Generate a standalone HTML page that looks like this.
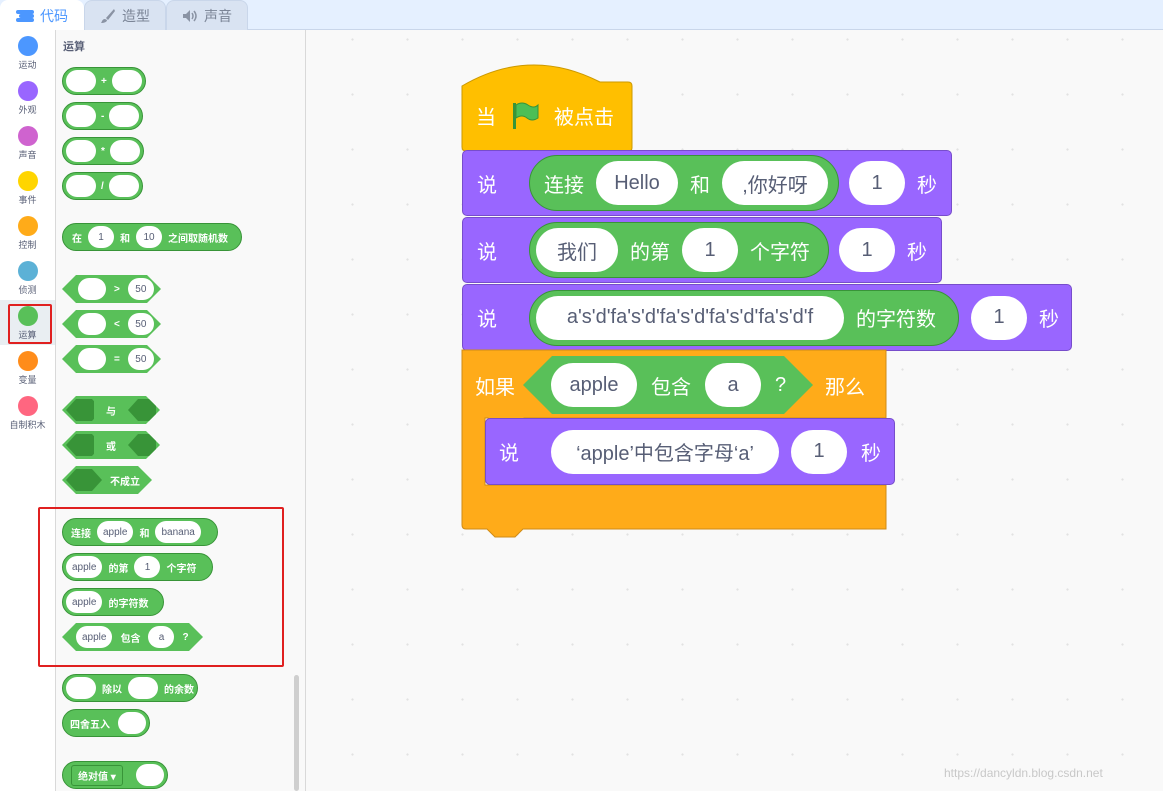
<!DOCTYPE html>
<html><head><meta charset="utf-8"><style>
*{box-sizing:border-box;margin:0;padding:0}
body{width:1163px;height:791px;overflow:hidden;position:relative;background:#f9f9f9;font-family:"Liberation Sans","Noto Sans CJK SC",sans-serif;}
.abs{position:absolute}
.top{left:0;top:0;width:1163px;height:30px;background:#e5f0ff;border-bottom:1px solid #c9d6ea}
.tab{position:absolute;top:0;height:30px;border:1px solid #c9d6ea;border-bottom:none;border-radius:8px 8px 0 0;background:#d9e3f2;color:#7b8597;font-size:14px;display:flex;align-items:center;justify-content:center;gap:6px}
.cats{left:0;top:30px;width:56px;height:761px;background:#fff;border-right:1px solid #d9d9d9}
.cat{position:absolute;left:0;width:55px;text-align:center;font-size:9px;color:#575e75}
.cat i{display:block;width:20px;height:20px;border-radius:50%;margin:0 auto 2px}
.pal{left:56px;top:30px;width:250px;height:761px;background:#f9f9f9;border-right:1px solid #d9d9d9}
.ws{left:306px;top:30px;width:857px;height:761px;background-color:#f9f9f9;background-image:radial-gradient(circle,#e2e2e2 0.8px,transparent 1.4px);background-size:55px 55px;background-position:19px 37px}
.pr{position:absolute;height:28px;background:#59c059;border:1px solid #389438;border-radius:14px;display:flex;align-items:center;gap:5px;padding:0 3px;color:#fff;font-size:10px;font-weight:bold;white-space:nowrap}
.pi{background:#fff;border-radius:11px;height:22px;min-width:28px;color:#575e75;font-weight:normal;font-size:10px;display:flex;align-items:center;justify-content:center;padding:0 6px}
.hex{position:absolute;height:28px;background:#59c059;clip-path:polygon(14px 0,calc(100% - 14px) 0,100% 50%,calc(100% - 14px) 100%,14px 100%,0 50%);display:flex;align-items:center;gap:8px;padding:0 16px;color:#fff;font-size:10px;font-weight:bold}
.dh{width:36px;height:22px;background:#389438;clip-path:polygon(10px 0,26px 0,36px 50%,26px 100%,10px 100%,0 50%)}
.blk{position:absolute;display:flex;align-items:center;color:#fff;font-size:20px;white-space:nowrap}
.say{background:#9966ff;border:1px solid #774dcb;border-radius:5px}
.R{background:#59c059;border:1px solid #389438;border-radius:30px;height:56px;display:flex;align-items:center;gap:12px;padding:0 6px}
.I{background:#fff;border-radius:22px;height:44px;min-width:54px;padding:0 14px;display:flex;align-items:center;justify-content:center;color:#575e75;font-size:20px}
.red{position:absolute;border:2px solid #e02020;border-radius:2px}
</style></head><body>
<div class="abs top"></div>
<div class="tab" style="left:0;width:84px;background:#fff;color:#4c97ff;border-color:#fff"><svg width="18" height="12" viewBox="0 0 18 12"><rect x="0" y="0" width="18" height="4" rx="2" fill="#4c97ff"/><rect x="3" y="4" width="15" height="4" rx="2" fill="#4c97ff"/><rect x="0" y="8" width="18" height="4" rx="2" fill="#4c97ff"/></svg>代码</div>
<div class="tab" style="left:84px;width:82px"><svg width="16" height="16" viewBox="0 0 16 16"><path d="M14 1 L6 10 L8 12 L15 3Z M5 11 C2 11 2 14 1 15 C4 15 7 14 7 12Z" fill="#8a93a4"/></svg>造型</div>
<div class="tab" style="left:166px;width:82px"><svg width="16" height="14" viewBox="0 0 16 14"><path d="M1 5h3l4-4v12l-4-4H1z" fill="#8a93a4"/><path d="M10 4q2 3 0 6M12 2q4 5 0 10" stroke="#8a93a4" fill="none" stroke-width="1.5"/></svg>声音</div>

<div class="abs cats">
 <div class="cat" style="top:6px"><i style="background:#4c97ff"></i>运动</div>
 <div class="cat" style="top:51px"><i style="background:#9966ff"></i>外观</div>
 <div class="cat" style="top:96px"><i style="background:#cf63cf"></i>声音</div>
 <div class="cat" style="top:141px"><i style="background:#ffd500"></i>事件</div>
 <div class="cat" style="top:186px"><i style="background:#ffab19"></i>控制</div>
 <div class="cat" style="top:231px"><i style="background:#5cb1d6"></i>侦测</div>
 <div class="cat" style="top:270px;height:45px;background:#e9eef2;padding-top:6px"><i style="background:#59c059"></i>运算</div>
 <div class="cat" style="top:321px"><i style="background:#ff8c1a"></i>变量</div>
 <div class="cat" style="top:366px"><i style="background:#ff6680"></i>自制积木</div>
</div>
<div class="red" style="left:8px;top:304px;width:44px;height:40px"></div>

<div class="abs pal">
 <div style="position:absolute;left:7px;top:8px;font-size:11px;font-weight:bold;color:#575e75">运算</div>
 <div style="position:absolute;left:238px;top:645px;width:5px;height:116px;background:#cfcfcf;border-radius:3px"></div>
</div>
<div class="pr" style="left:62px;top:67px"><span class="pi" style="min-width:30px"></span>+<span class="pi" style="min-width:30px"></span></div>
<div class="pr" style="left:62px;top:102px"><span class="pi" style="min-width:30px"></span>-<span class="pi" style="min-width:30px"></span></div>
<div class="pr" style="left:62px;top:137px"><span class="pi" style="min-width:30px"></span>*<span class="pi" style="min-width:30px"></span></div>
<div class="pr" style="left:62px;top:172px"><span class="pi" style="min-width:30px"></span>/<span class="pi" style="min-width:30px"></span></div>
<div class="pr" style="left:62px;top:223px;width:180px;padding-left:9px;gap:6px"><span>在</span><span class="pi" style="min-width:26px">1</span><span>和</span><span class="pi" style="min-width:26px">10</span><span>之间取随机数</span></div>
<div class="hex" style="left:62px;top:275px;width:99px"><span class="pi"></span>&gt;<span class="pi" style="min-width:26px">50</span></div>
<div class="hex" style="left:62px;top:310px;width:99px"><span class="pi"></span>&lt;<span class="pi" style="min-width:26px">50</span></div>
<div class="hex" style="left:62px;top:345px;width:99px"><span class="pi"></span>=<span class="pi" style="min-width:26px">50</span></div>
<div class="hex" style="left:62px;top:396px;width:98px;padding:0 4px;gap:12px"><span class="dh"></span>与<span class="dh"></span></div>
<div class="hex" style="left:62px;top:431px;width:98px;padding:0 4px;gap:12px"><span class="dh"></span>或<span class="dh"></span></div>
<div class="hex" style="left:62px;top:466px;width:90px;padding:0 4px;gap:8px"><span class="dh"></span>不成立</div>
<div class="red" style="left:38px;top:507px;width:246px;height:160px"></div>
<div class="pr" style="left:62px;top:518px;width:156px;padding-left:8px;gap:6px"><span>连接</span><span class="pi">apple</span><span>和</span><span class="pi">banana</span></div>
<div class="pr" style="left:62px;top:553px;width:151px;gap:6px"><span class="pi">apple</span><span>的第</span><span class="pi" style="min-width:26px">1</span><span>个字符</span></div>
<div class="pr" style="left:62px;top:588px;width:102px;gap:6px"><span class="pi">apple</span><span>的字符数</span></div>
<div class="hex" style="left:62px;top:623px;width:141px;padding:0 14px"><span class="pi">apple</span><span>包含</span><span class="pi" style="min-width:26px">a</span><span>?</span></div>
<div class="pr" style="left:62px;top:674px;width:136px;gap:6px"><span class="pi" style="min-width:30px"></span><span>除以</span><span class="pi" style="min-width:30px"></span><span>的余数</span></div>
<div class="pr" style="left:62px;top:709px;width:88px;padding-left:7px"><span>四舍五入</span><span class="pi" style="margin-left:auto"></span></div>
<div class="pr" style="left:62px;top:761px;width:106px;padding-left:8px"><span style="border:1px solid #389438;border-radius:3px;padding:2px 6px">绝对值 ▾</span><span class="pi" style="margin-left:auto"></span></div>

<div class="abs ws"></div>

<svg class="abs" style="left:460px;top:56px" width="175" height="100"><path d="M2 30 Q70 -10 140 26 L168 26 Q172 26 172 30 L172 92 Q172 95 168 95 L60 95 L52 102 L30 102 L22 95 L6 95 Q2 95 2 91 Z" fill="#ffbf00" stroke="#cc9900"/></svg>
<div class="blk" style="left:476px;top:100px;gap:14px">当<svg width="30" height="30" viewBox="0 0 30 30"><rect x="3" y="3" width="3" height="26" fill="#389438"/><path d="M6 5 Q12 1 18 5 T28 5 V18 Q22 22 17 18 T6 18Z" fill="#4cbf56" stroke="#389438"/></svg>被点击</div>

<div class="blk say" style="left:462px;top:150px;width:490px;height:66px;padding-left:14px">说<div class="R" style="margin-left:32px;width:310px;padding-left:14px"><span>连接</span><span class="I" style="width:82px">Hello</span><span>和</span><span class="I" style="width:106px">,你好呀</span></div><span class="I" style="margin-left:10px;width:56px">1</span><span style="margin-left:12px">秒</span></div>
<div class="blk say" style="left:462px;top:217px;width:480px;height:66px;padding-left:14px">说<div class="R" style="margin-left:32px;width:300px"><span class="I" style="width:82px">我们</span><span>的第</span><span class="I" style="width:56px">1</span><span>个字符</span></div><span class="I" style="margin-left:10px;width:56px">1</span><span style="margin-left:12px">秒</span></div>
<div class="blk say" style="left:462px;top:284px;width:610px;height:67px;padding-left:14px">说<div class="R" style="margin-left:32px;width:430px"><span class="I" style="width:308px">a's'd'fa's'd'fa's'd'fa's'd'fa's'd'f</span><span>的字符数</span></div><span class="I" style="margin-left:12px;width:56px">1</span><span style="margin-left:12px">秒</span></div>

<svg class="abs" style="left:461px;top:349px" width="428" height="195"><path d="M1 1 L425 1 L425 69 L63 69 L55 75 L35 75 L27 69 L24 69 L24 136 L425 136 L425 180 L62 180 L54 188 L34 188 L26 180 L5 180 Q1 180 1 176 Z" fill="#ffab19" stroke="#cf8b17"/></svg>
<div class="blk" style="left:475px;top:356px;height:58px">如果<div class="hex" style="position:relative;height:58px;width:290px;margin-left:8px;padding:0 26px 0 28px;gap:14px;font-size:20px;font-weight:normal;clip-path:polygon(29px 0,calc(100% - 29px) 0,100% 50%,calc(100% - 29px) 100%,29px 100%,0 50%)"><span class="I" style="width:86px">apple</span><span>包含</span><span class="I" style="width:56px">a</span><span>?</span></div><span style="margin-left:12px">那么</span></div>
<div class="blk say" style="left:485px;top:418px;width:410px;height:67px;padding-left:13px">说<div class="I" style="margin-left:32px;width:228px">‘apple’中包含字母‘a’</div><span class="I" style="margin-left:12px;width:56px">1</span><span style="margin-left:14px">秒</span></div>

<div class="abs" style="left:944px;top:766px;font-size:12px;color:#c8c8c8">https://dancyldn.blog.csdn.net</div>
</body></html>
